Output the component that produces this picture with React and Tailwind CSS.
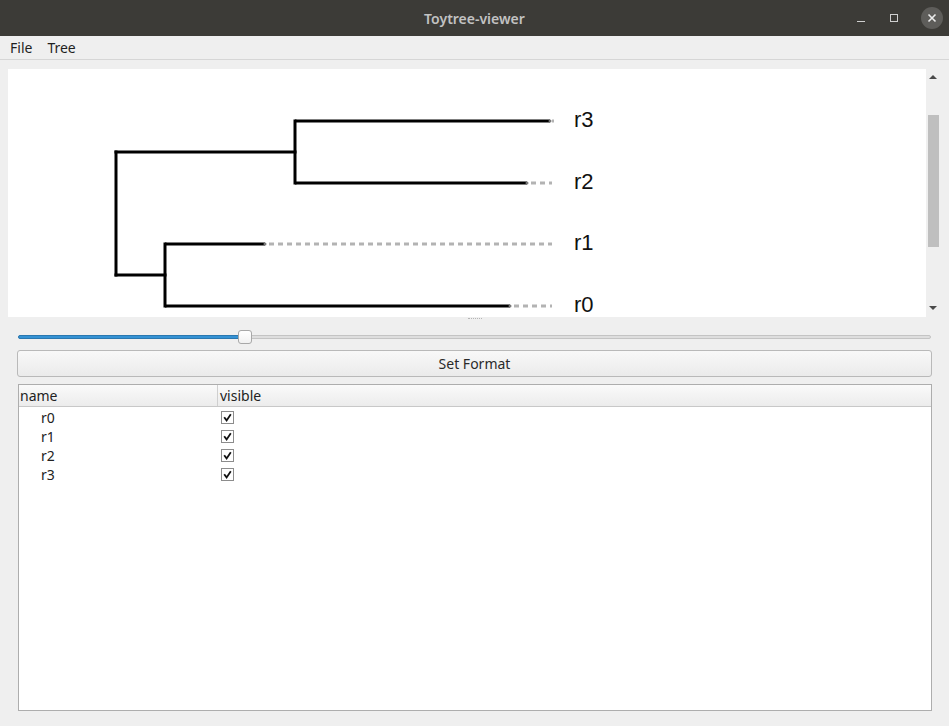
import React from "react";

const leaves = [
  { name: "r3", y: 121, solidEnd: 550 },
  { name: "r2", y: 183, solidEnd: 527 },
  { name: "r1", y: 244, solidEnd: 265 },
  { name: "r0", y: 306, solidEnd: 510 },
];

function TitleBar() {
  return (
    <div className="relative flex h-9 items-center justify-center bg-[#3c3b37]">
      <span className="text-[14px] font-semibold text-[#c2c2c2]">Toytree-viewer</span>
      <div className="absolute right-[6px] top-0 flex h-9 items-center">
        <div className="mr-[25px] mt-[6px] h-[1px] w-[8px] bg-[#cfcfcf]" />
        <div className="mr-[23px] h-[8px] w-[8px] border border-[#cfcfcf]" />
        <div className="flex h-[22px] w-[22px] items-center justify-center rounded-full bg-[#5e5d5a]">
          <svg width="10" height="10" viewBox="0 0 10 10">
            <path d="M1.5 1.5 L8.5 8.5 M8.5 1.5 L1.5 8.5" stroke="#ececec" strokeWidth="1.6" />
          </svg>
        </div>
      </div>
    </div>
  );
}

function MenuBar() {
  return (
    <div className="flex h-[24px] items-center gap-[15px] border-b border-[#d6d6d6] px-[10px] text-[14px] text-[#1f1f1f]">
      <span>File</span>
      <span>Tree</span>
    </div>
  );
}

function TreeCanvas() {
  return (
    <div className="ml-[8px] mt-[9px] flex h-[248px] w-[932px]">
      <div className="h-full w-[918px] overflow-hidden bg-white">
        <svg width="918" height="248" viewBox="8 69 918 248">
          <g stroke="#000" strokeWidth="3" fill="none" strokeLinecap="square">
            <path d="M116 152 V275" />
            <path d="M116 152 H295" />
            <path d="M116 275 H165" />
            <path d="M295 121 V183" />
            <path d="M165 244 V306" />
          </g>
          {leaves.map((leaf) => (
            <g key={leaf.name}>
              <path
                d={`M${leaf.solidEnd + 4} ${leaf.y} H552`}
                stroke="#b3b3b3"
                strokeWidth="3"
                strokeDasharray="5 4"
                fill="none"
              />
              <path
                d={`M${leaf.name === "r0" || leaf.name === "r1" ? 165 : 295} ${leaf.y} H${leaf.solidEnd}`}
                stroke="#000"
                strokeWidth="3"
                fill="none"
              />
              <circle cx={leaf.solidEnd} cy={leaf.y} r="1.5" fill="#777" />
              <text
                x="574"
                y={leaf.y + 6}
                fontFamily="'Liberation Sans', Arial, sans-serif"
                fontSize="22"
                fill="#111"
              >
                {leaf.name}
              </text>
            </g>
          ))}
        </svg>
      </div>
      <div className="relative h-full w-[14px] bg-[#efefef]">
        <svg className="absolute left-[3px] top-[6px]" width="8" height="5" viewBox="0 0 8 5">
          <path d="M0 4 L4 0 L8 4 Z" fill="#4a4a4a" />
        </svg>
        <div className="absolute left-[2px] top-[46px] h-[132px] w-[11px] bg-[#bfbfbf]" />
        <svg className="absolute bottom-[6px] left-[3px]" width="8" height="5" viewBox="0 0 8 5">
          <path d="M0 0 L8 0 L4 4 Z" fill="#4a4a4a" />
        </svg>
      </div>
    </div>
  );
}

function Splitter() {
  return (
    <div className="flex h-[13px] justify-center pt-[1px]">
      <div className="h-[1px] w-[14px] border-t border-dotted border-[#b5b5b5]" />
    </div>
  );
}

function Slider() {
  return (
    <div className="relative ml-[18px] h-[14px] w-[913px]">
      <div className="absolute left-0 right-0 top-[5px] h-[4px] rounded-full border border-[#c4c4c4] bg-[#dedede]" />
      <div className="absolute left-0 top-[5px] h-[4px] w-[224px] rounded-full border border-[#2a78b0] bg-[#3592d4]" />
      <div className="absolute left-[220px] top-0 h-[14px] w-[14px] rounded-[3px] border border-[#a8a8a8] bg-gradient-to-b from-white to-[#f1f1f1]" />
    </div>
  );
}

function CheckBox() {
  return (
    <div className="flex h-[13px] w-[13px] items-center justify-center border border-[#8c8c8c] bg-white">
      <svg width="9" height="9" viewBox="0 0 9 9">
        <path d="M1.2 4.2 L3.6 7.4 L7.8 1.2" stroke="#111" strokeWidth="1.8" fill="none" />
      </svg>
    </div>
  );
}

function NodeTable() {
  const rows = ["r0", "r1", "r2", "r3"];
  return (
    <div className="ml-[18px] mt-[7px] flex h-[327px] w-[914px] flex-col border border-[#adadad] bg-white">
      <div className="flex h-[22px] border-b border-[#c8c8c8] bg-gradient-to-b from-[#fafafa] to-[#ececec] text-[14px] text-[#222]">
        <div className="flex w-[199px] items-center border-r border-[#cfcfcf] pl-[1px]">name</div>
        <div className="flex items-center pl-[2px]">visible</div>
      </div>
      <div className="pt-[1px]">
        {rows.map((row) => (
          <div key={row} className="flex h-[19px] items-center text-[14px] text-[#222]">
            <div className="w-[200px] pl-[22px]">{row}</div>
            <div className="pl-[2px]">
              <CheckBox />
            </div>
          </div>
        ))}
      </div>
    </div>
  );
}

export default function App() {
  return (
    <div
      className="h-[726px] w-[949px] overflow-hidden bg-[#efefef]"
      style={{ fontFamily: "'Noto Sans', 'Open Sans', sans-serif" }}
    >
      <TitleBar />
      <MenuBar />
      <TreeCanvas />
      <Splitter />
      <Slider />
      <div className="ml-[17px] mt-[6px] flex h-[27px] w-[915px] items-center justify-center rounded-[3px] border border-[#b9b9b9] bg-gradient-to-b from-[#f8f8f8] to-[#ebebeb] text-[14px] text-[#2a2a2a]">
        Set Format
      </div>
      <NodeTable />
    </div>
  );
}
